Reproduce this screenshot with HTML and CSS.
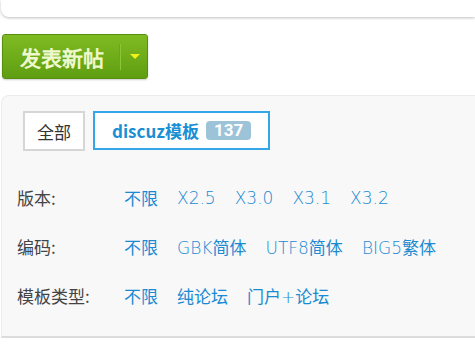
FILE: index.html
```html
<!DOCTYPE html>
<html lang="zh-CN">
<head>
    <meta charset="UTF-8">
    <meta name="viewport" content="width=device-width, initial-scale=1.0">
    <title>discuz模板</title>
    <link rel="stylesheet" href="styles.css">
</head>
<body>
    <div class="top-card"></div>

    <div class="post-bar">
        <button class="post-btn">
            <span class="post-text">发表新帖</span>
            <span class="post-sep"></span>
            <span class="post-arrow"></span>
        </button>
    </div>

    <div class="panel">
        <div class="tabs">
            <a class="tab">全部</a>
            <a class="tab tab-active">discuz模板 <span class="badge">137</span></a>
        </div>

        <div class="filter-row">
            <span class="filter-label">版本:</span>
            <a class="filter-link">不限</a>
            <a class="filter-link">X2.5</a>
            <a class="filter-link">X3.0</a>
            <a class="filter-link">X3.1</a>
            <a class="filter-link">X3.2</a>
        </div>
        <div class="filter-row">
            <span class="filter-label">编码:</span>
            <a class="filter-link">不限</a>
            <a class="filter-link">GBK简体</a>
            <a class="filter-link">UTF8简体</a>
            <a class="filter-link">BIG5繁体</a>
        </div>
        <div class="filter-row">
            <span class="filter-label">模板类型:</span>
            <a class="filter-link">不限</a>
            <a class="filter-link">纯论坛</a>
            <a class="filter-link">门户+论坛</a>
        </div>
    </div>
</body>
</html>
```

FILE: styles.css
```css
* {
    box-sizing: border-box;
}

body {
    margin: 0;
    background: #fff;
    font-family: "Noto Sans CJK SC", "Noto Sans", sans-serif;
    overflow: hidden;
}

.top-card {
    height: 17px;
    margin-left: 1px;
    background: #fff;
    border-radius: 0 0 0 8px;
    box-shadow: 0 1px 3px rgba(0, 0, 0, 0.25);
}

.post-bar {
    padding: 17px 0 0 2px;
    height: 78px;
}

.post-btn {
    display: flex;
    align-items: center;
    width: 146px;
    height: 45px;
    padding: 0 0 0 17px;
    border: 1px solid #56900e;
    border-radius: 3px;
    background: linear-gradient(#7fbb22, #5f9e12);
    box-shadow: 0 1px 2px rgba(0, 0, 0, 0.2);
    cursor: pointer;
}

.post-text {
    font-size: 21px;
    font-weight: bold;
    color: #eef8cc;
}

.post-sep {
    width: 2px;
    height: 26px;
    margin: 0 9px 0 15px;
    background: #6aa51a;
    border-right: 1px solid #8cc43a;
}

.post-arrow {
    width: 0;
    height: 0;
    border-left: 5px solid transparent;
    border-right: 5px solid transparent;
    border-top: 5px solid #f2f21a;
}

.panel {
    height: 243px;
    margin-left: 1px;
    padding: 15px 0 0 15px;
    background: #f8f8f8;
    border-top: 1px solid #ececec;
    border-left: 1px solid #ececec;
    border-bottom: 2px solid #dcdcdc;
    border-radius: 8px 0 0 0;
}

.tabs {
    display: flex;
    gap: 8px;
    padding-left: 6px;
    margin-bottom: 22px;
}

.tab {
    display: flex;
    align-items: center;
    justify-content: center;
    height: 40px;
    padding: 0 12px;
    background: #fff;
    border: 2px solid #d6d6d6;
    font-size: 17px;
    color: #333;
}

.tab-active {
    width: 177px;
    height: 39px;
    justify-content: flex-start;
    padding: 0 0 0 17px;
    border-color: #35a6e8;
    color: #1a8fd3;
    font-weight: bold;
    gap: 7px;
}

.badge {
    padding: 0 8px;
    height: 19px;
    line-height: 19px;
    border-radius: 4px;
    background: #9cc3d8;
    color: #fff;
    font-family: Roboto, sans-serif;
    font-size: 17px;
    font-weight: bold;
}

.filter-row {
    display: flex;
    align-items: center;
    height: 49px;
    font-size: 17px;
}

.filter-label {
    width: 107px;
    color: #444;
}

.filter-link {
    margin-right: 19px;
    color: #1a8ad3;
    font-family: "DejaVu Sans ExtraLight", "DejaVu Sans Light", "Noto Sans CJK SC", sans-serif;
    cursor: pointer;
}
```
